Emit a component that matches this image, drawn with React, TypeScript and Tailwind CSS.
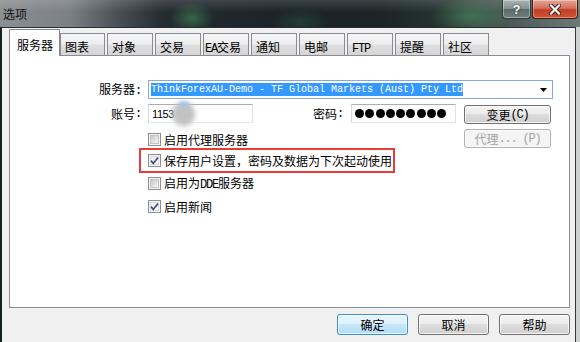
import React from 'react';

const cjk = "font-['Noto_Sans_CJK_SC',sans-serif]";

function Mono({ children }: { children: React.ReactNode }) {
  return <span className="font-['Liberation_Mono',monospace] text-[12px] tracking-[-1.2px]">{children}</span>;
}

function CheckBox({ checked }: { checked?: boolean }) {
  return (
    <div className="relative h-[13px] w-[13px] shrink-0 border border-[#8e8f8f] bg-[#f4f4f4] p-[1px]">
      <div
        className={
          checked
            ? 'h-full w-full border border-[#dcdcdc] bg-[linear-gradient(135deg,#ececec,#ffffff)]'
            : 'h-full w-full border border-[#c2c4c6] bg-[linear-gradient(135deg,#c6c8ca,#f6f6f6)]'
        }
      />
      {checked && (
        <svg className="absolute inset-0" width="11" height="11" viewBox="0 0 11 11">
          <path d="M2 5.6 L4.3 8.4 L9 2.4" fill="none" stroke="#394c8f" strokeWidth="1.7" />
        </svg>
      )}
    </div>
  );
}

function Check({ checked, children }: { checked?: boolean; children: React.ReactNode }) {
  return (
    <div className="flex h-[13px] items-center">
      <CheckBox checked={checked} />
      <span className="ml-[3px] whitespace-nowrap">{children}</span>
    </div>
  );
}

interface BtnProps {
  children: React.ReactNode;
  className?: string;
  disabled?: boolean;
  primary?: boolean;
}

function WinButton({ children, className = '', disabled, primary }: BtnProps) {
  const skin = disabled
    ? 'border-[#adb2b5] bg-[#f4f4f4] text-[#a3a3a3]'
    : primary
      ? 'border-[#3c8fd1] bg-[linear-gradient(180deg,#eaf6fd_0%,#dcf0fc_49%,#c7e7fa_50%,#b3dcf5_100%)] text-black'
      : 'border-[#707070] bg-[linear-gradient(180deg,#f4f4f4_0%,#ebebeb_49%,#dddddd_50%,#cfcfcf_100%)] text-black';
  return (
    <div
      className={`flex shrink-0 items-center justify-center whitespace-nowrap rounded-[3px] border shadow-[inset_0_0_0_1px_rgba(255,255,255,0.75)] ${skin} ${className}`}
    >
      {children}
    </div>
  );
}

const tabs: { label: React.ReactNode; pad?: string }[] = [
  { label: '对象' },
  { label: '交易' },
  { label: <><Mono>EA</Mono>交易</>, pad: 'pl-[1px]' },
  { label: '通知' },
  { label: '电邮' },
  { label: <Mono>FTP</Mono> },
  { label: '提醒' },
  { label: '社区' },
];

const tabSkin =
  'mt-[4px] h-[22px] border border-b-0 border-[#898c95] pt-[7px] bg-[linear-gradient(180deg,#f6f6f6_0%,#ededed_45%,#dedede_55%,#d5d5d5_100%)]';

export default function App() {
  return (
    <div className={`flex h-[342px] w-[580px] flex-col overflow-hidden bg-[#cdd2d1] ${cjk} text-[12px] leading-[12px] text-black`}>
      {/* title bar */}
      <div className="flex h-[27px] shrink-0 items-start [background-image:linear-gradient(180deg,rgba(255,255,255,0.14),rgba(255,255,255,0)_45%),radial-gradient(22px_16px_at_192px_18px,rgba(64,140,92,0.6),rgba(64,140,92,0)),radial-gradient(40px_18px_at_470px_16px,rgba(72,150,100,0.55),rgba(72,150,100,0)),radial-gradient(30px_14px_at_300px_22px,rgba(50,110,75,0.35),rgba(50,110,75,0)),linear-gradient(90deg,#8a8f93_0%,#7b8085_12%,#4b5156_20%,#252c31_28%,#1b2328_50%,#1c2527_66%,#263330_76%,#465551_86%,#6d7977_100%)]">
        <div className="flex h-[27px] items-center pl-[3px] text-[#121212]">选项</div>
        <div className="ml-auto mr-[2px] flex gap-[1px]">
          <div className="flex h-[19px] w-[29px] items-center justify-center rounded-b-[4px] border border-t-0 border-[#2e3a39] bg-[linear-gradient(180deg,#aab5b3_0%,#84918f_48%,#5c6b67_52%,#6f7f7b_100%)] shadow-[inset_0_0_0_1px_rgba(255,255,255,0.35)]">
            <span className="font-['Liberation_Sans',sans-serif] text-[13px] font-bold leading-[13px] text-white [text-shadow:0_0_2px_#1a1a1a]">?</span>
          </div>
          <div className="flex h-[19px] w-[46px] items-center justify-center rounded-b-[4px] border border-t-0 border-[#3a1e18] bg-[linear-gradient(180deg,#e6a597_0%,#d46f5c_45%,#c13f27_55%,#d0552f_100%)] shadow-[inset_0_0_0_1px_rgba(255,255,255,0.35)]">
            <svg width="12" height="11" viewBox="0 0 12 11">
              <path d="M2 1.5 L10 9.5 M10 1.5 L2 9.5" stroke="#3b1a12" strokeWidth="4" strokeLinecap="square" />
              <path d="M2 1.5 L10 9.5 M10 1.5 L2 9.5" stroke="#ffffff" strokeWidth="2.2" strokeLinecap="square" />
            </svg>
          </div>
        </div>
      </div>

      {/* dialog body */}
      <div className="flex flex-1">
        <div className="w-[576px] border-l-2 border-r border-t border-l-[#15231c] border-r-[#30383b] border-t-[#262e31] bg-[#f0f0f0]">
          {/* tab strip */}
          <div className="mt-[1px] flex h-[26px] items-start pl-[7px]">
            <div className="relative z-10 h-[27px] w-[51px] border border-b-0 border-[#898c95] bg-white pl-[7px] pt-[9px]">
              服务器
            </div>
            <div className={`w-[45px] pl-[4px] ${tabSkin}`}>图表</div>
            {tabs.map((t, i) => (
              <div key={i} className={`ml-[2px] w-[46px] ${t.pad ?? 'pl-[4px]'} ${tabSkin}`}>
                {t.label}
              </div>
            ))}
          </div>

          {/* tab page */}
          <div className="ml-[7px] flex h-[253px] w-[561px] flex-col border border-[#898c95] bg-white">
            <div className="mt-[24px] flex h-[19px] items-center">
              <div className="w-[131px] text-right">
                服务器<Mono>:</Mono>
              </div>
              <div className="ml-[7px] flex h-[19px] w-[405px] items-center border border-[#86aad6] bg-white pl-[2px]">
                <div className="flex h-[13px] items-center bg-[#3399ff] font-['Liberation_Mono',monospace] text-[10px] leading-[13px] whitespace-pre text-white">
                  ThinkForexAU-Demo - TF Global Markets (Aust) Pty Ltd
                </div>
                <svg className="ml-auto mr-[5px]" width="7" height="4" viewBox="0 0 7 4">
                  <polygon points="0,0 7,0 3.5,4" fill="#000" />
                </svg>
              </div>
            </div>

            <div className="mt-[5px] flex items-start">
              <div className="flex h-[19px] w-[131px] items-center justify-end">
                账号<Mono>:</Mono>
              </div>
              <div className="relative ml-[7px] flex h-[19px] w-[105px] items-center border border-[#abadb3] border-b-[#e3e9ef] border-l-[#d5dae2] border-r-[#dde3ea] bg-white pl-[3px]">
                <span className="font-['Liberation_Sans',sans-serif] text-[11px] tracking-[-0.4px]">1153</span>
                <div className="absolute left-[23px] top-[-3px] h-[24px] w-[23px] rounded-full bg-[#c2c2c2] blur-[2.5px]" />
                <div className="absolute left-[30px] top-[-3px] h-[5px] w-[10px] rounded-full bg-[#a9c3e3] blur-[1.5px]" />
              </div>
              <div className="flex h-[19px] w-[90px] items-center justify-end">
                密码<Mono>:</Mono>
              </div>
              <div className="ml-[8px] flex h-[19px] w-[105px] items-center gap-[1.3px] border border-[#abadb3] border-b-[#e3e9ef] border-l-[#d5dae2] border-r-[#dde3ea] bg-white pl-[3px]">
                {Array.from({ length: 9 }).map((_, i) => (
                  <div key={i} className="h-[9px] w-[9px] rounded-full bg-black" />
                ))}
              </div>
              <WinButton className="ml-[8px] mt-[1px] h-[19px] w-[87px]">
                变更<Mono>(C)</Mono>
              </WinButton>
            </div>

            <div className="mt-[5px] flex items-start">
              <div className="ml-[138px] mt-[4px]">
                <Check>启用代理服务器</Check>
              </div>
              <WinButton disabled className="ml-auto mr-[18px] h-[19px] w-[87px]">
                代理<Mono>... (P)</Mono>
              </WinButton>
            </div>

            <div className="ml-[129px] h-[25px] w-[256px] border-2 border-[#ea3b3b] pl-[7px] pt-[4px]">
              <Check checked>保存用户设置，密码及数据为下次起动使用</Check>
            </div>

            <div className="ml-[138px] mt-[4px]">
              <Check>
                启用为<Mono>DDE</Mono>服务器
              </Check>
            </div>

            <div className="ml-[138px] mt-[10px]">
              <Check checked>启用新闻</Check>
            </div>
          </div>

          {/* dialog buttons */}
          <div className="mt-[6px] flex justify-end gap-[10px] pr-[5px]">
            <WinButton primary className="h-[21px] w-[71px]">确定</WinButton>
            <WinButton className="h-[21px] w-[71px]">取消</WinButton>
            <WinButton className="h-[21px] w-[71px]">帮助</WinButton>
          </div>
        </div>
      </div>
    </div>
  );
}
